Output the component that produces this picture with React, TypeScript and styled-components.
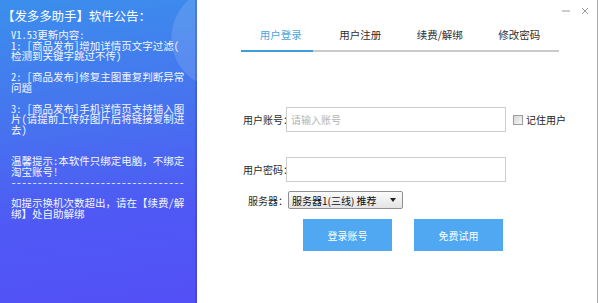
import React from "react";
import styled, { createGlobalStyle } from "styled-components";

const Global = createGlobalStyle`
  html, body { margin: 0; padding: 0; background: #ffffff; }
  body { font-family: "Noto Sans CJK SC", "Liberation Sans", sans-serif; }
  * { box-sizing: border-box; }
`;

const Window = styled.div`
  display: flex;
  width: 598px;
  height: 303px;
  overflow: hidden;
  background: #ffffff;
`;

const Notice = styled.aside`
  width: 197px;
  flex: none;
  padding: 8px 0 0 0;
  color: #ffffff;
  background:
    radial-gradient(circle at 222px 38px, rgba(255, 255, 255, 0.12) 0 50px, rgba(255, 255, 255, 0) 51px),
    linear-gradient(172deg, #3b8fec 0%, #4772ef 40%, #4f58f4 70%, #5350f7 100%);
  box-shadow: inset -2px 0 0 rgba(40, 40, 160, 0.25);
`;

const NoticeTitle = styled.h1`
  margin: 0 0 0 2px;
  font-family: "Noto Sans CJK SC", sans-serif;
  font-size: 12.5px;
  font-weight: 400;
  line-height: 16px;
  white-space: nowrap;
  letter-spacing: -0.1px;
`;

const NoticeBody = styled.div`
  margin: 6px 0 0 11px;
  font-family: "Noto Sans Mono CJK SC", "Noto Sans CJK SC", monospace;
  font-size: 10.5px;
  line-height: 10.5px;
  white-space: pre;
  color: #f4f6ff;
`;

const Main = styled.main`
  flex: 1;
  display: flex;
  flex-direction: column;
  border-right: 1px solid #a8a8a8;
  font-family: "Noto Sans CJK SC", sans-serif;
  color: #333333;
`;

const TitleBar = styled.div`
  height: 22px;
  display: flex;
  justify-content: flex-end;
  align-items: center;
  gap: 11px;
  padding-right: 8px;
`;

const WinButton = styled.span`
  display: flex;
  width: 8px;
  height: 8px;
  color: #9a9a9a;
`;

const Tabs = styled.nav`
  display: flex;
  margin: 0 38px 0 44px;
  border-bottom: 2px solid #cbcbcb;
`;

const Tab = styled.div<{ $active?: boolean }>`
  flex: 1;
  position: relative;
  height: 28px;
  padding-bottom: 4px;
  display: flex;
  align-items: center;
  justify-content: center;
  font-size: 10.5px;
  color: ${(p) => (p.$active ? "#4aa6dc" : "#2e2e2e")};
  &::after {
    content: "";
    display: ${(p) => (p.$active ? "block" : "none")};
    position: absolute;
    left: 0;
    bottom: -2px;
    width: 72px;
    height: 2px;
    background: #3d9edb;
  }
`;

const Form = styled.form`
  display: flex;
  flex-direction: column;
  margin: 55px 0 0 0;
`;

const FieldRow = styled.div<{ $indent: number; $gap?: number }>`
  display: flex;
  align-items: center;
  padding-left: ${(p) => p.$indent}px;
  margin-top: ${(p) => p.$gap ?? 0}px;
`;

const Label = styled.label<{ $width: number }>`
  width: ${(p) => p.$width}px;
  flex: none;
  font-size: 10px;
  white-space: nowrap;
  color: #2a2a2a;
  overflow: visible;
`;

const TextInput = styled.input`
  width: 220px;
  height: 25px;
  flex: none;
  border: 1px solid #cdcdcd;
  background: #ffffff;
  padding: 0 4px;
  font-family: "Noto Sans CJK SC", sans-serif;
  font-size: 10px;
  color: #333;
  outline: none;
  &::placeholder { color: #b4b4b4; }
`;

const Remember = styled.span`
  display: flex;
  align-items: center;
  gap: 3px;
  margin-left: 7px;
  font-size: 10px;
  color: #222;
`;

const Box = styled.span`
  width: 10px;
  height: 10px;
  border: 1px solid #9c9c9c;
  background: linear-gradient(135deg, #d8d8d8, #f6f6f6);
`;

const SelectBox = styled.div`
  width: 115px;
  height: 18px;
  display: flex;
  align-items: center;
  justify-content: space-between;
  padding: 0 6px 0 3px;
  border: 1px solid #8f8f8f;
  border-radius: 2px;
  background: linear-gradient(#fbfbfb, #e4e4e4);
  font-size: 10px;
  color: #111;
  white-space: nowrap;
`;

const Caret = styled.span`
  width: 0;
  height: 0;
  border-left: 3px solid transparent;
  border-right: 3px solid transparent;
  border-top: 4px solid #222;
`;

const Buttons = styled.div`
  display: flex;
  gap: 22px;
  margin: 10px 0 0 106px;
`;

const ActionButton = styled.button`
  width: 89px;
  height: 32px;
  border: none;
  background: #50a8f2;
  color: #ffffff;
  font-family: "Noto Sans CJK SC", sans-serif;
  font-size: 10px;
  padding: 0;
`;

const notice = `V1.53更新内容:
1: [商品发布]增加详情页文字过滤(
检测到关键字跳过不传)

2: [商品发布]修复主图重复判断异常
问题

3: [商品发布]手机详情页支持插入图
片(请提前上传好图片后将链接复制进
去)


温馨提示:本软件只绑定电脑，不绑定
淘宝账号!
---------------------------------

如提示换机次数超出，请在【续费/解
绑】处自助解绑`;

export default function App() {
  return (
    <>
      <Global />
      <Window>
        <Notice>
          <NoticeTitle>【发多多助手】软件公告：</NoticeTitle>
          <NoticeBody>{notice}</NoticeBody>
        </Notice>
        <Main>
          <TitleBar>
            <WinButton>
              <svg width="8" height="8" viewBox="0 0 8 8">
                <line x1="0" y1="4" x2="8" y2="4" stroke="currentColor" strokeWidth="1" />
              </svg>
            </WinButton>
            <WinButton>
              <svg width="8" height="8" viewBox="0 0 8 8">
                <path d="M1 1 L7 7 M7 1 L1 7" stroke="currentColor" strokeWidth="1" />
              </svg>
            </WinButton>
          </TitleBar>
          <Tabs>
            <Tab $active>用户登录</Tab>
            <Tab>用户注册</Tab>
            <Tab>续费/解绑</Tab>
            <Tab>修改密码</Tab>
          </Tabs>
          <Form onSubmit={(e) => e.preventDefault()}>
            <FieldRow $indent={46}>
              <Label $width={43}>用户账号：</Label>
              <TextInput placeholder="请输入账号" />
              <Remember>
                <Box />
                记住用户
              </Remember>
            </FieldRow>
            <FieldRow $indent={46} $gap={25}>
              <Label $width={43}>用户密码：</Label>
              <TextInput type="password" />
            </FieldRow>
            <FieldRow $indent={51} $gap={9}>
              <Label $width={40}>服务器：</Label>
              <SelectBox>
                服务器1(三线) 推荐
                <Caret />
              </SelectBox>
            </FieldRow>
            <Buttons>
              <ActionButton type="button">登录账号</ActionButton>
              <ActionButton type="button">免费试用</ActionButton>
            </Buttons>
          </Form>
        </Main>
      </Window>
    </>
  );
}
